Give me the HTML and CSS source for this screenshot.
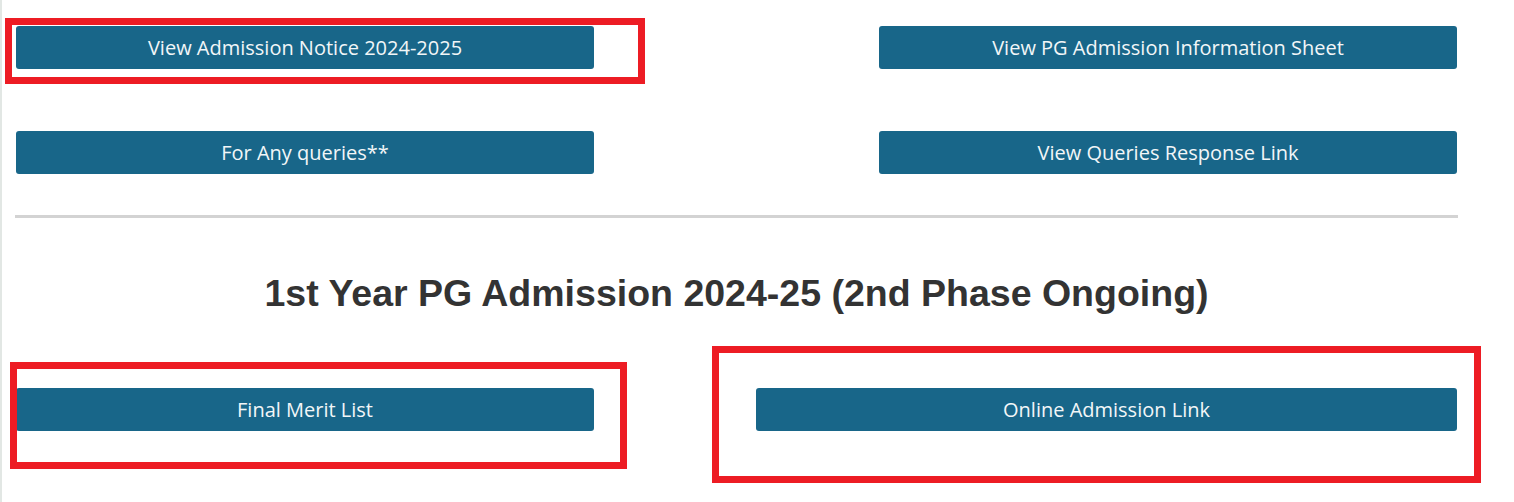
FILE: index.html
```html
<!DOCTYPE html>
<html lang="en">
<head>
    <meta charset="UTF-8">
    <meta name="viewport" content="width=device-width, initial-scale=1.0">
    <title>PG Admission 2024-25</title>
    <link rel="stylesheet" href="styles.css">
</head>
<body>

<div class="page">
    <div class="btn-row first-row">
        <a class="admission-btn" href="#">View Admission Notice 2024-2025</a>
        <a class="admission-btn" href="#">View PG Admission Information Sheet</a>
    </div>

    <div class="btn-row second-row">
        <a class="admission-btn" href="#">For Any queries**</a>
        <a class="admission-btn" href="#">View Queries Response Link</a>
    </div>

    <hr class="divider">

    <h2 class="section-title">1st Year PG Admission 2024-25 (2nd Phase Ongoing)</h2>

    <div class="btn-row third-row">
        <a class="admission-btn" href="#">Final Merit List</a>
        <a class="admission-btn wide" href="#">Online Admission Link</a>
    </div>
</div>

<!-- red highlight boxes drawn over the page -->
<div class="mark mark-notice"></div>
<div class="mark mark-merit"></div>
<div class="mark mark-online"></div>

</body>
</html>
```

FILE: styles.css
```css
body {
    margin: 0;
    background-color: #fff;
    font-family: "Open Sans", Arial, sans-serif;
    border-left: 2px solid #e2e7e4;
    min-height: 502px;
    box-sizing: border-box;
}
.page {
    width: 1441px;
    margin-left: 14px;
    padding-top: 26px;
}
.btn-row {
    display: flex;
    justify-content: space-between;
}
.second-row {
    margin-top: 62px;
}
.admission-btn {
    display: block;
    width: 578px;
    height: 43px;
    line-height: 43px;
    background-color: #186689;
    color: #f2f6f8;
    text-align: center;
    text-decoration: none;
    font-size: 20px;
    border-radius: 3px;
}
.admission-btn.wide {
    width: 701px;
}
.divider {
    margin: 41px 0 0 -1px;
    width: 1443px;
    height: 3px;
    border: none;
    background-color: #d3d3d3;
}
.section-title {
    margin: 54px 0 0 0;
    font-family: "Liberation Sans", Arial, sans-serif;
    font-size: 37.5px;
    line-height: 42px;
    font-weight: bold;
    color: #333;
    text-align: center;
}
.third-row {
    margin-top: 74px;
}

/* annotation boxes */
.mark {
    position: absolute;
    border: 7px solid #ed1c24;
    box-sizing: border-box;
}
.mark-notice {
    left: 5px;
    top: 18px;
    width: 640px;
    height: 66px;
}
.mark-merit {
    left: 10px;
    top: 362px;
    width: 617px;
    height: 107px;
}
.mark-online {
    left: 712px;
    top: 346px;
    width: 769px;
    height: 137px;
}
```
